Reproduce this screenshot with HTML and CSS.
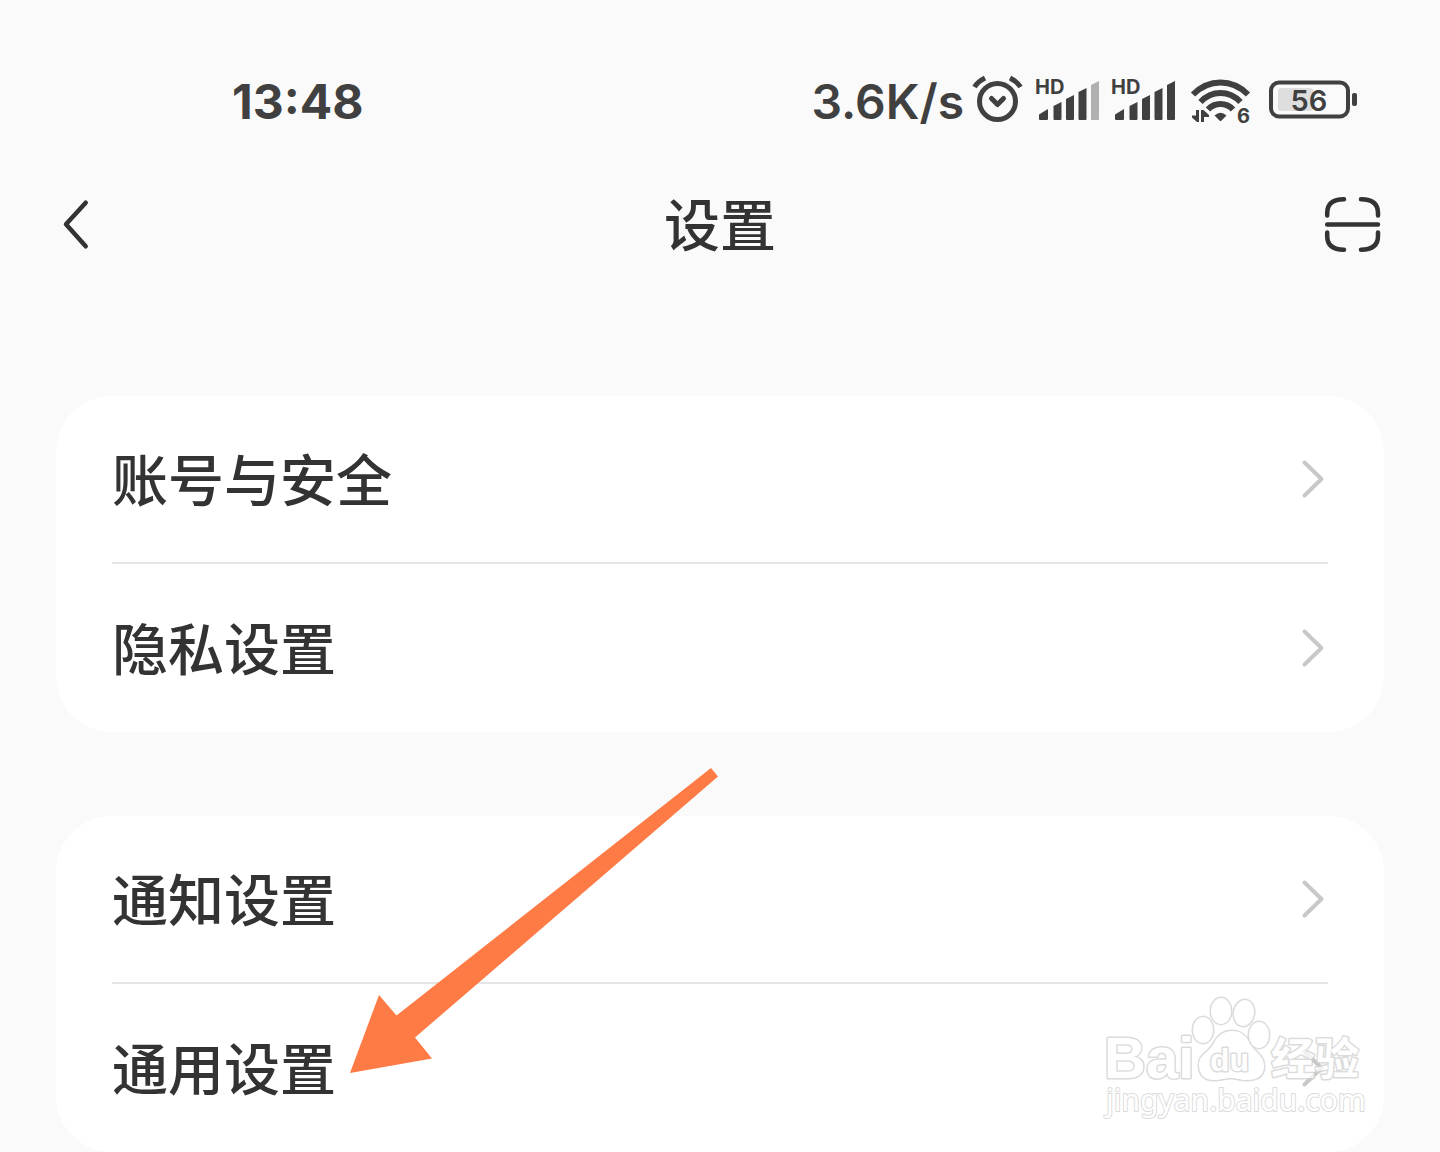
FILE: index.html
```html
<!DOCTYPE html>
<html lang="zh-CN">

<head>
	<meta charset="UTF-8">
	<meta name="viewport" content="width=device-width, initial-scale=1.0">
	<title>设置</title>
	<link rel="stylesheet" href="styles.css">
</head>

<body>
	<div class="status-bar">
		<span class="time">13:48</span>
		<div class="status-right">
			<span class="speed">3.6K/s</span>
			<div class="status-icons">
				<!-- alarm -->
				<svg width="52" height="52" viewBox="0 0 52 52" fill="none" stroke="#404040" stroke-width="5">
					<circle cx="25.5" cy="27.5" r="18"/>
					<path d="M2.500 13Q6 7.500 13 4M48.500 13Q45 7.500 38 4"/>
					<path d="M19.500 24.500l6 6 6-6" stroke-linecap="round" stroke-linejoin="round"/>
				</svg>
				<!-- sim 1 -->
				<svg width="64" height="52" viewBox="0 0 64 52" fill="#404040">
					<text class="hd" x="-1" y="20">HD</text>
					<path d="M3 40.500L12 35v10q0 1-1 1H4q-1 0-1-1zM17.500 32l8-4v17q0 1-1 1h-6q-1 0-1-1zM30 25l8-4v24q0 1-1 1h-6q-1 0-1-1zM42.500 18l8-4v31q0 1-1 1h-6q-1 0-1-1z"/>
					<path d="M55 11l8-4v38q0 1-1 1h-6q-1 0-1-1z" fill="#b0b0b0"/>
				</svg>
				<!-- sim 2 -->
				<svg width="64" height="52" viewBox="0 0 64 52" fill="#404040">
					<text class="hd" x="-1" y="20">HD</text>
					<path d="M3 40.500L12 35v10q0 1-1 1H4q-1 0-1-1zM17.500 32l8-4v17q0 1-1 1h-6q-1 0-1-1zM30 25l8-4v24q0 1-1 1h-6q-1 0-1-1zM42.500 18l8-4v31q0 1-1 1h-6q-1 0-1-1zM55 11l8-4v38q0 1-1 1h-6q-1 0-1-1z"/>
				</svg>
				<!-- wifi -->
				<svg width="68" height="52" viewBox="0 0 68 52">
					<g fill="none" stroke="#404040" stroke-width="6">
						<path d="M5 20.500Q17 8.500 32.500 8.500T60 20.500"/>
						<path d="M12.500 28Q21 19 32.500 19T52.500 28"/>
						<path d="M20 35.500Q25 30 32.500 30T45 35.500"/>
					</g>
					<path d="M26.500 41.500Q32.500 36 38.500 41.500L33.500 46.500Q32.500 47.500 31.500 46.500z" fill="#404040"/>
					<path d="M8 36h3v12h-2L4 43.500V41.500h4zM13 48V36h2.500l5.500 5v2h-5v5z" fill="#404040"/>
					<text class="wifi-gen" x="49" y="49">6</text>
				</svg>
				<!-- battery -->
				<svg width="90" height="52" viewBox="0 0 90 52">
					<rect x="10" y="14" width="35" height="23" rx="3" fill="#dedede"/>
					<rect x="3" y="8.500" width="77" height="34" rx="8" fill="none" stroke="#404040" stroke-width="4"/>
					<rect x="84" y="19" width="5" height="13" rx="2" fill="#404040"/>
					<text class="charge" x="41" y="37" text-anchor="middle">56</text>
				</svg>
			</div>
		</div>
	</div>

	<header class="nav">
		<button type="button" class="nav-button" aria-label="返回">
			<svg width="56" height="56" viewBox="0 0 56 56" fill="none" stroke="#333" stroke-width="4.500" stroke-linecap="round" stroke-linejoin="round">
				<path d="M25.700 6.700L6 28.300l19.700 22"/>
			</svg>
		</button>
		<h1>设置</h1>
		<button type="button" class="nav-button" aria-label="扫一扫">
			<svg width="56" height="56" viewBox="0 0 56 56" fill="none" stroke="#333" stroke-width="4.500" stroke-linecap="round">
				<path d="M3.200 19.500V17Q3.200 3.200 20 3.200M37 3.200Q54 3.200 54 17v2.500M3.200 36.500V40Q3.200 53.700 20 53.700M37 53.700Q54 53.700 54 40v-3.500M3.200 28.500H54"/>
			</svg>
		</button>
	</header>

	<main>
		<ul class="card">
			<li>
				<a href="#account"><span class="label">账号与安全</span>
					<svg class="chevron" width="28" height="40" viewBox="0 0 28 40"><path d="M4.500 3.500L21.500 20l-17 16.500"/></svg>
				</a>
			</li>
			<li>
				<a href="#privacy"><span class="label">隐私设置</span>
					<svg class="chevron" width="28" height="40" viewBox="0 0 28 40"><path d="M4.500 3.500L21.500 20l-17 16.500"/></svg>
				</a>
			</li>
		</ul>

		<ul class="card">
			<li>
				<a href="#notice"><span class="label">通知设置</span>
					<svg class="chevron" width="28" height="40" viewBox="0 0 28 40"><path d="M4.500 3.500L21.500 20l-17 16.500"/></svg>
				</a>
			</li>
			<li>
				<a href="#general"><span class="label">通用设置</span>
					<svg class="chevron" width="28" height="40" viewBox="0 0 28 40"><path d="M4.500 3.500L21.500 20l-17 16.500"/></svg>
				</a>
				<!-- pointer to this row -->
				<svg class="arrow" width="368" height="305" viewBox="0 0 368 305">
					<path d="M0 305L29 227 46.500 247.500 361 0 368 8.500 65 269.500 82 290.500z" fill="#ff7b45"/>
				</svg>
				<svg class="watermark" width="270" height="136" viewBox="0 0 270 136">
					<text class="wm-bai" x="4" y="86">Bai</text>
					<path d="M132 39C142 39 147 45 151 53 155 61 164 63 164 74 164 84 157 88 147 88 140 88 137 86 131 86S121 88 114 88C104 88 99 82 99 73 99 62 109 61 114 51 118 43 124 39 132 39z"/>
					<ellipse cx="103" cy="38" rx="10" ry="13"/>
					<ellipse cx="121" cy="19" rx="10" ry="13"/>
					<ellipse cx="144" cy="21" rx="10" ry="13" transform="rotate(10 144 21)"/>
					<ellipse cx="159" cy="43" rx="10" ry="13"/>
					<text class="wm-du" x="110" y="79">du</text>
					<text class="wm-cn" x="171" y="83">经验</text>
					<text class="wm-url" x="6" y="119">jingyan.baidu.com</text>
				</svg>
			</li>
		</ul>
	</main>
</body>

</html>
```
FILE: styles.css
```css
* {
	box-sizing: border-box;
}

body {
	margin: 0;
	background-color: #fafafa;
	color: #333;
	font-family: "Noto Sans CJK SC", sans-serif;
}

svg {
	display: block;
	overflow: visible;
}

/* status bar */
.status-bar {
	display: flex;
	align-items: center;
	justify-content: space-between;
	padding: 72px 82px 0 232px;
	height: 128px;
	color: #404040;
	font-family: Inter, sans-serif;
	font-size: 48px;
	font-weight: 600;
	line-height: 52px;
}

.time,
.speed {
	padding-top: 4px;
}

.time {
	font-weight: 700;
}

.status-right {
	display: flex;
	align-items: center;
	gap: 8px;
}

.status-icons {
	display: flex;
	align-items: center;
	gap: 12px;
}

.hd,
.wifi-gen,
.charge {
	font-family: Inter, sans-serif;
	font-weight: 600;
	fill: #404040;
}

.hd,
.wifi-gen {
	font-size: 20px;
	font-weight: 700;
}

.charge {
	font-size: 29px;
}

/* title row */
.nav {
	display: flex;
	align-items: center;
	justify-content: space-between;
	padding: 40px 60px 0;
}

.nav h1 {
	margin: 0;
	padding-bottom: 4px;
	font-size: 56px;
	font-weight: 500;
	line-height: 108px;
}

.nav-button {
	padding: 0;
	border: none;
	background: none;
	cursor: pointer;
}

/* lists */
main {
	display: flex;
	flex-direction: column;
	gap: 84px;
	padding: 116px 56px 0;
}

.card {
	margin: 0;
	padding: 0 56px;
	border-radius: 56px;
	background-color: #fff;
	list-style: none;
}

.card li {
	position: relative;
}

.card li + li a {
	border-bottom: none;
}

.card a {
	display: flex;
	align-items: center;
	justify-content: space-between;
	height: 168px;
	border-bottom: 2px solid #e5e5e5;
	color: #333;
	font-size: 56px;
	font-weight: 500;
	text-decoration: none;
}

.label {
	padding-bottom: 6px;
}

.chevron {
	fill: none;
	stroke: #c8c8c8;
	stroke-width: 4;
	stroke-linecap: round;
	stroke-linejoin: round;
}

.arrow {
	position: absolute;
	left: 238px;
	bottom: 79px;
}

.watermark {
	position: absolute;
	right: -42px;
	bottom: 24px;
	fill: #fff;
	stroke: #d0d0d0;
	stroke-width: 3;
	stroke-linejoin: round;
	paint-order: stroke;
	opacity: 0.75;
	pointer-events: none;
}

.wm-bai,
.wm-du {
	font-family: "Liberation Sans", Arial, sans-serif;
	font-weight: 700;
}

.wm-bai {
	font-size: 58px;
}

.wm-du {
	font-size: 32px;
}

.wm-cn {
	font-size: 44px;
	font-weight: 700;
}

.wm-url {
	font-family: "Noto Sans", sans-serif;
	font-size: 30px;
	stroke-width: 2;
}
```
